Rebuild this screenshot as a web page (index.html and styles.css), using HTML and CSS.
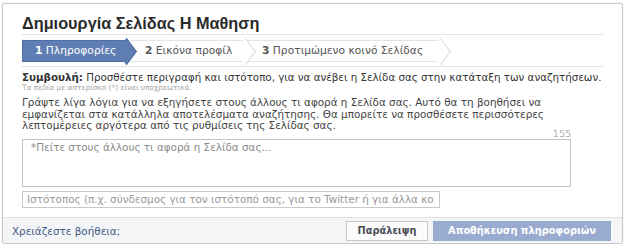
FILE: index.html
```html
<!DOCTYPE html>
<html lang="el">
<head>
<meta charset="utf-8">
<title>Δημιουργία Σελίδας</title>
<link rel="stylesheet" href="styles.css">
</head>
<body>
<div class="dialog">
  <div class="content">
    <h1 class="title">Δημιουργία Σελίδας Η Μαθηση</h1>
    <div class="steps">
      <div class="step step-active"><b>1</b> Πληροφορίες</div>
      <div class="step step-mid"><b>2</b> Εικόνα προφίλ</div>
      <div class="step step-last"><b>3</b> Προτιμώμενο κοινό Σελίδας</div>
    </div>
    <div class="body">
      <p class="tip"><b>Συμβουλή:</b> Προσθέστε περιγραφή και ιστότοπο, για να ανέβει η Σελίδα σας στην κατάταξη των αναζητήσεων.</p>
      <p class="required">Τα πεδία με αστερίσκο (*) είναι υποχρεωτικά.</p>
      <p class="desc">Γράψτε λίγα λόγια για να εξηγήσετε στους άλλους τι αφορά η Σελίδα σας. Αυτό θα τη βοηθήσει να εμφανίζεται στα κατάλληλα αποτελέσματα αναζήτησης. Θα μπορείτε να προσθέσετε περισσότερες λεπτομέρειες αργότερα από τις ρυθμίσεις της Σελίδας σας.</p>
      <div class="counter">155</div>
      <div class="textarea">*Πείτε στους άλλους τι αφορά η Σελίδα σας...</div>
      <div class="input">Ιστότοπος (π.χ. σύνδεσμος για τον ιστότοπό σας, για το Twitter ή για άλλα κο</div>
    </div>
  </div>
  <div class="footer">
    <span class="help">Χρειάζεστε βοήθεια;</span>
    <div class="buttons">
      <span class="btn btn-skip">Παράλειψη</span>
      <span class="btn btn-save">Αποθήκευση πληροφοριών</span>
    </div>
  </div>
</div>
</body>
</html>
```
FILE: styles.css
```css
* { box-sizing: border-box; }
html, body { margin: 0; padding: 0; background: #fff; }
body { font-family: "DejaVu Sans", Verdana, sans-serif; color: #333; }

.dialog {
  margin: 3px 0 0 2px;
  width: 621px;
  height: 241px;
  border: 1px solid #c9c9c9;
  border-radius: 2px;
  box-shadow: 0 0 2px rgba(0,0,0,0.12);
  display: flex;
  flex-direction: column;
}
.content { padding: 0 19px; flex: 1; }

.title {
  margin: 0;
  padding-top: 8px;
  height: 31px;
  font-family: "Liberation Sans", Arial, sans-serif;
  font-size: 16.3px;
  line-height: 22px;
  font-weight: bold;
  color: #2b2b2b;
  border-bottom: 1px solid #e3e3e3;
}

.steps {
  display: flex;
  margin-top: 5px;
  height: 22px;
}
.step {
  position: relative;
  height: 22px;
  line-height: 20px;
  font-size: 10.7px;
  color: #555;
  border-top: 1px solid #e4e4e4;
  border-bottom: 1px solid #e4e4e4;
  background: #fff;
  white-space: nowrap;
}
.step b { font-weight: bold; }
.step::after {
  content: "";
  position: absolute;
  right: -8px;
  top: 2px;
  width: 16px;
  height: 16px;
  background: #fff;
  border-top: 1px solid #d8d8d8;
  border-right: 1px solid #d8d8d8;
  transform: rotate(45deg) skew(8deg, 8deg);
  z-index: 2;
}
.step-active {
  width: 105px;
  padding-left: 12px;
  background: #5f7eb3;
  color: #fff;
  border-color: #4f6ea3;
  border-left: 1px solid #4f6ea3;
}
.step-active::after { background: #5f7eb3; border-color: #4f6ea3; }
.step-mid { width: 119px; padding-left: 18px; }
.step-last { width: 195px; padding-left: 16px; }

.body { border-top: 1px solid #e3e3e3; margin-top: 4px; padding-top: 4px; }
.body p { margin: 0; }
.tip { font-size: 10.3px; line-height: 12px; color: #333; white-space: nowrap; }
.required { font-size: 7.4px; line-height: 10px; color: #a5a5a5; }
.desc { margin-top: 4px !important; font-size: 10.4px; line-height: 11.6px; color: #444; width: 545px; }
.counter { width: 549px; text-align: right; font-size: 9.5px; color: #b0b0b0; line-height: 10px; margin-top: -3px; }
.textarea {
  margin-top: 0;
  width: 549px;
  height: 48px;
  border: 1px solid #c4c4c4;
  padding: 1px 8px;
  font-size: 10.4px;
  line-height: 12px;
  color: #8a8a8a;
}
.input {
  margin-top: 4px;
  width: 418px;
  height: 17px;
  border: 1px solid #c9c9c9;
  padding: 0 4px;
  font-size: 10.4px;
  line-height: 15px;
  color: #999;
  white-space: nowrap;
  overflow: hidden;
}

.footer {
  height: 26px;
  background: #f4f5f6;
  border-top: 1px solid #e0e0e0;
  display: flex;
  align-items: center;
  justify-content: space-between;
  padding: 0 11px 0 9px;
}
.help { font-size: 10.4px; color: #445a85; }
.buttons { display: flex; gap: 5px; padding-top: 1px; }
.btn {
  height: 20px;
  line-height: 18px;
  font-size: 9.8px;
  font-weight: bold;
  text-align: center;
  border: 1px solid #c6c6c6;
  white-space: nowrap;
}
.btn-skip { width: 82px; background: #fcfcfc; color: #4b4f56; }
.btn-save { width: 178px; background: #9aabd0; border-color: #9aabd0; color: #fff; }
```
